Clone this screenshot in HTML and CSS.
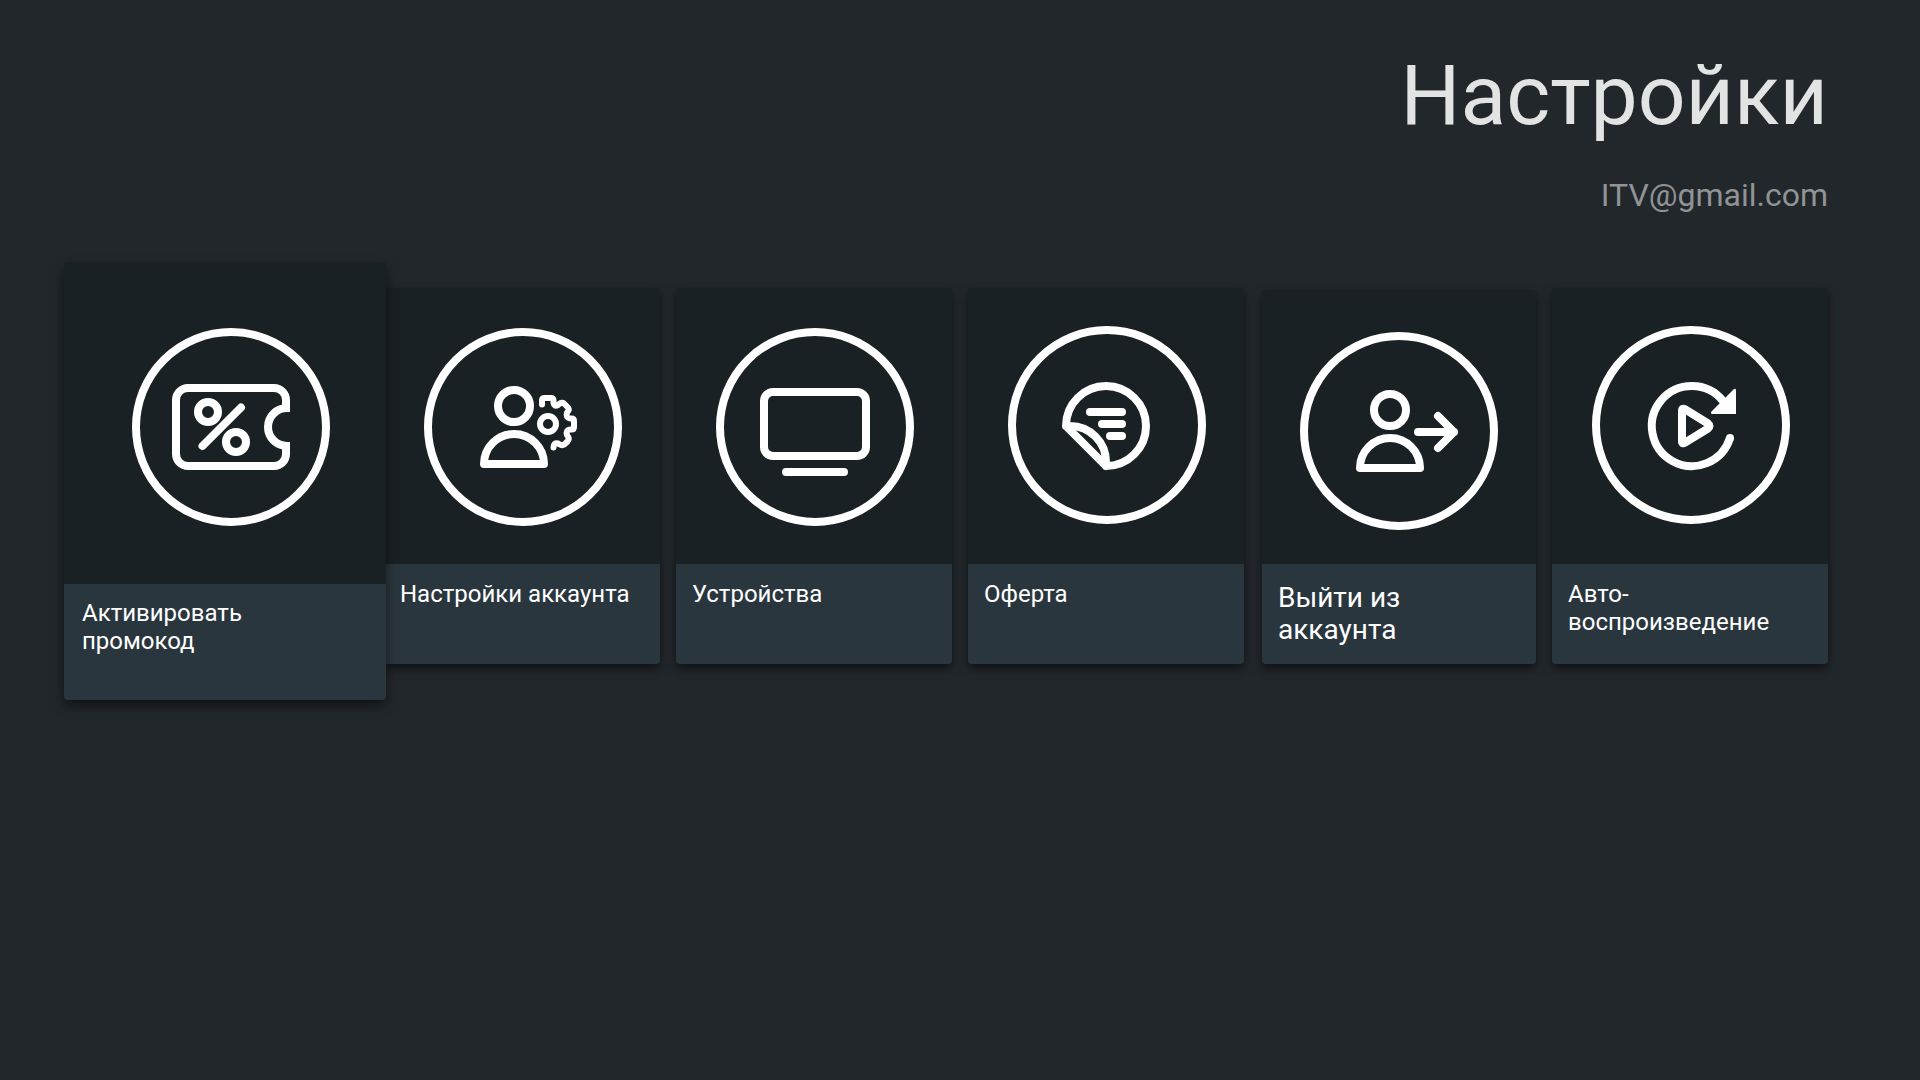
FILE: index.html
```html
<!DOCTYPE html>
<html lang="ru">
<head>
<meta charset="utf-8">
<meta name="viewport" content="width=device-width, initial-scale=1">
<title>Настройки</title>
<link rel="stylesheet" href="styles.css">
</head>
<body>
<main class="screen">
  <header class="header">
    <h1 class="title">Настройки</h1>
    <p class="account">ITV@gmail.com</p>
  </header>
  <nav class="cards" aria-label="Настройки">
    <button class="card card-focused" type="button">
      <svg class="icon" viewBox="-167 -165 322 322" aria-hidden="true">
        <circle r="95"/>
        <path d="M55 -15V-27A12 12 0 0 0 43 -39H-43A12 12 0 0 0 -55 -27V27A12 12 0 0 0 -43 39H43A12 12 0 0 0 55 27V15"/>
        <path d="M59 -19H56A19 19 0 0 0 56 19H59"/>
        <circle cx="-23" cy="-15" r="10"/>
        <circle cx="5" cy="15" r="10"/>
        <path class="round" d="M-28.500 19L10 -19.500"/>
      </svg>
      <span class="label">Активировать<br>промокод</span>
    </button>
    <button class="card" type="button">
      <svg class="icon" viewBox="-139 -139 276 276" aria-hidden="true">
        <circle r="95"/>
        <circle cx="-9" cy="-21" r="16"/>
        <path class="round" d="M-39 37A30 30 0 0 1 21 37Z"/>
        <g class="thin">
          <circle cx="25" cy="-3" r="8"/>
          <path class="round" d="M19 -22.500V-26.500Q19 -29 21.500 -29H28Q30.500 -29 30.500 -26.500V-24Q31 -20 35 -22L36.500 -23.300Q39 -25 41 -23.500L44.500 -20Q46.500 -18 45.200 -16L44 -14.500Q42.500 -9 47 -8.500H48.500Q51 -8.500 51 -6V0Q51 2.500 48.500 2.500H47Q42.500 3 44 8L45.200 10Q46.500 12 44.500 14.500L41.500 17.300Q39 19 36.500 17.300L35 16.500Q30.500 15.500 30.500 20.500"/>
        </g>
      </svg>
      <span class="label">Настройки аккаунта</span>
    </button>
    <button class="card" type="button">
      <svg class="icon" viewBox="-139 -139 276 276" aria-hidden="true">
        <circle r="95"/>
        <rect x="-51" y="-35" width="102" height="64" rx="9"/>
        <path class="round" d="M-29 45H29"/>
      </svg>
      <span class="label">Устройства</span>
    </button>
    <button class="card" type="button">
      <svg class="icon" viewBox="-139 -137 276 276" aria-hidden="true">
        <circle r="95"/>
        <path class="round" d="M-41 1A40 40 0 1 1 -1 41V37A36 36 0 0 0 -37 1H-41L-1 41"/>
        <path class="round" d="M-17 -13H15M-5 -1H15M3 11H15"/>
      </svg>
      <span class="label">Оферта</span>
    </button>
    <button class="card card-large-text" type="button">
      <svg class="icon" viewBox="-137 -141 274 274" aria-hidden="true">
        <circle r="95"/>
        <circle cx="-9" cy="-21" r="16"/>
        <path class="round" d="M-39 37A30 30 0 0 1 21 37Z"/>
        <path class="round" d="M19 1H55M39 -15L55 1L39 17"/>
      </svg>
      <span class="label">Выйти из<br>аккаунта</span>
    </button>
    <button class="card" type="button">
      <svg class="icon" viewBox="-139 -137 276 276" aria-hidden="true">
        <circle r="95"/>
        <path d="M32 -24A40 40 0 1 0 39 13"/>
        <circle class="solid" cx="39" cy="13" r="4"/>
        <path class="solid" d="M42.500 -35.500Q45 -37.500 45 -34.500V-11H21.500Q19 -11 20.500 -13.500Z"/>
        <path class="round" d="M-9 -14Q-9 -17.500 -6 -15.700L17 -1.500Q20 1 17 3.500L-6 17.700Q-9 19.500 -9 16Z"/>
      </svg>
      <span class="label">Авто-<br>воспроизведение</span>
    </button>
  </nav>
</main>
</body>
</html>
```
FILE: styles.css
```css
* {
  box-sizing: border-box;
}

body {
  margin: 0;
  min-height: 100vh;
  background: #22272b;
  color: #fff;
  font-family: Roboto, "Noto Sans", sans-serif;
}

.screen {
  display: flex;
  flex-direction: column;
  gap: 47px;
  padding: 46px 92px 46px 64px;
}

.header {
  display: flex;
  flex-direction: column;
  align-items: flex-end;
  gap: 29px;
}

.title,
.account {
  margin: 0;
  font-weight: 400;
}

.title {
  color: #e2e4e3;
  font-size: 84px;
  line-height: 100px;
}

.account {
  color: #919395;
  font-size: 32px;
  line-height: 40px;
}

.cards {
  display: flex;
  align-items: flex-start;
  gap: 16px;
}

.card {
  display: flex;
  flex: 276 1 0;
  flex-direction: column;
  min-width: 0;
  margin: 26px 0 0;
  padding: 0;
  overflow: hidden;
  border: 0;
  border-radius: 4px;
  background: #1a2124;
  box-shadow: 0 5px 10px rgba(0, 0, 0, 0.5);
  color: inherit;
  font: inherit;
  font-size: 24px;
  line-height: 28px;
  text-align: left;
}

.card-focused {
  position: relative;
  z-index: 1;
  flex-grow: 322;
  margin: 0 -18px 0 0;
  box-shadow: 0 6px 12px rgba(0, 0, 0, 0.5);
}

.card-large-text {
  flex-grow: 274;
  margin: 28px 0 0 2px;
  font-size: 28px;
  line-height: 32px;
}

.label {
  width: 100%;
  min-height: 100px;
  padding: 16px;
  background: #2a363e;
}

.card-focused .label {
  min-height: 116px;
  padding: 15px 18px;
}

.card-large-text .label {
  padding: 18px 16px;
}

.icon {
  display: block;
  width: 100%;
  aspect-ratio: 1;
  fill: none;
  stroke: #fff;
  stroke-width: 8px;
}

.thin {
  stroke-width: 6px;
}

.round {
  stroke-linecap: round;
  stroke-linejoin: round;
}

.solid {
  fill: #fff;
  stroke: none;
}
```
